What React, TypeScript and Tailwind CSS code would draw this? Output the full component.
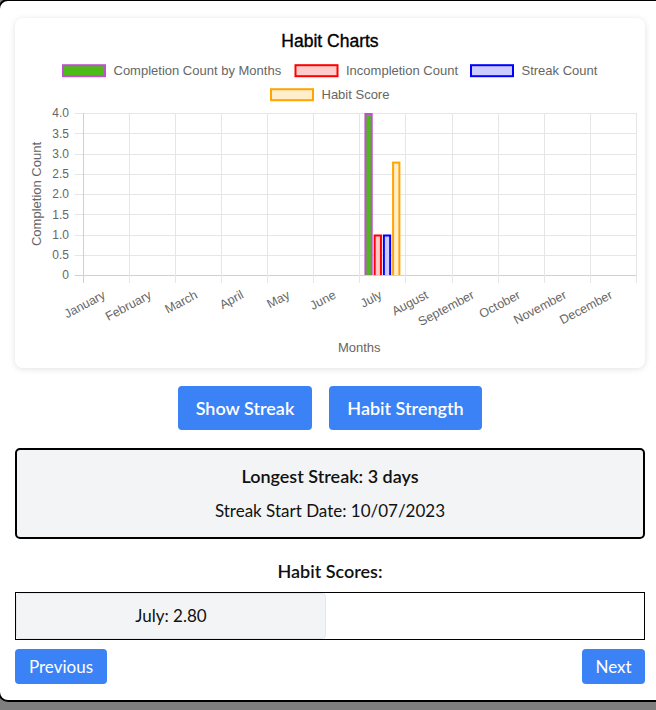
import React from "react";

const months = [
  "January",
  "February",
  "March",
  "April",
  "May",
  "June",
  "July",
  "August",
  "September",
  "October",
  "November",
  "December",
];

const L = 82.7;
const R = 636;
const T = 113;
const B = 275;
const CW = (R - L) / 12;
const yFor = (v: number) => B - (v / 4) * (B - T);

const ticks = ["4.0", "3.5", "3.0", "2.5", "2.0", "1.5", "1.0", "0.5", "0"];

const FONT = "'Liberation Sans', Arial, sans-serif";

function Bar({ x0, x1, v, fill, stroke }: { x0: number; x1: number; v: number; fill: string; stroke: string }) {
  const top = yFor(v);
  return (
    <g>
      <rect x={x0} y={top} width={x1 - x0} height={B - top} fill={stroke} />
      <rect x={x0 + 2} y={top + 2} width={x1 - x0 - 4} height={B - top - 2} fill={fill} />
    </g>
  );
}

function LegendItem({ x, cy, label, fill, stroke }: { x: number; cy: number; label: string; fill: string; stroke: string }) {
  return (
    <g>
      <rect x={x + 1} y={cy - 5.5} width={42} height={11} fill={fill} stroke={stroke} strokeWidth={2} />
      <text x={x + 51.5} y={cy + 4.6} fontSize={13} fill="#666" fontFamily={FONT}>
        {label}
      </text>
    </g>
  );
}

function Chart() {
  const cat = 6;
  const c0 = L + CW * cat;
  const inner = CW * 0.8;
  const start = c0 + (CW - inner) / 2;
  const slot = inner / 4;
  const bw = slot * 0.9;
  const bx = (i: number) => start + slot * i + (slot - bw) / 2;
  return (
    <svg width={630} height={350} viewBox="15 18 630 350" className="block">
      <text x={330} y={46.5} textAnchor="middle" fontSize={17.5} fill="#000" fontFamily={FONT} stroke="#000" strokeWidth={0.35}>
        Habit Charts
      </text>
      <LegendItem x={62} cy={70.7} label="Completion Count by Months" fill="#4cbb17" stroke="#c050d0" />
      <LegendItem x={294.5} cy={70.7} label="Incompletion Count" fill="#ffcccc" stroke="#ff0000" />
      <LegendItem x={470} cy={70.7} label="Streak Count" fill="#ccccff" stroke="#0000ff" />
      <LegendItem x={270} cy={94.7} label="Habit Score" fill="#ffedcc" stroke="#ffa500" />

      {ticks.map((t, k) => {
        const y = Math.round(T + k * ((B - T) / 8)) + 0.5;
        return (
          <g key={t}>
            <line x1={74.7} x2={R} y1={y} y2={y} stroke={k === 8 ? "#d0d0d0" : "#e6e6e6"} strokeWidth={1} />
            <text x={69} y={T + k * ((B - T) / 8) + 4.3} textAnchor="end" fontSize={12} fill="#666" fontFamily={FONT}>
              {t}
            </text>
          </g>
        );
      })}
      {Array.from({ length: 13 }).map((_, i) => {
        const x = Math.round(L + CW * i) + 0.5;
        return (
          <line key={i} x1={x} x2={x} y1={T} y2={283} stroke={i === 0 ? "#d0d0d0" : "#e6e6e6"} strokeWidth={1} />
        );
      })}

      <Bar x0={bx(0)} x1={bx(0) + bw} v={4} fill="#4cbb17" stroke="#c050d0" />
      <Bar x0={bx(1)} x1={bx(1) + bw} v={1} fill="#ffcccc" stroke="#ff0000" />
      <Bar x0={bx(2)} x1={bx(2) + bw} v={1} fill="#ccccff" stroke="#0000ff" />
      <Bar x0={bx(3)} x1={bx(3) + bw} v={2.8} fill="#ffedcc" stroke="#ffa500" />

      {months.map((m, i) => {
        const cx = L + CW * (i + 0.5) + 0.5;
        const yb = 297.5;
        return (
          <text
            key={m}
            x={cx}
            y={yb}
            textAnchor="end"
            fontSize={12.5}
            fill="#666"
            fontFamily={FONT}
            transform={`rotate(-28 ${cx} ${yb})`}
          >
            {m}
          </text>
        );
      })}

      <text x={359.3} y={352} textAnchor="middle" fontSize={13} fill="#666" fontFamily={FONT}>
        Months
      </text>
      <text
        x={0}
        y={0}
        textAnchor="middle"
        fontSize={13}
        fill="#666"
        fontFamily={FONT}
        transform="translate(40.6 194) rotate(-90)"
      >
        Completion Count
      </text>
    </svg>
  );
}

export default function App() {
  return (
    <div className="w-[656px] h-[710px] bg-[#7f7f7f] overflow-hidden font-['Lato','Noto_Sans',sans-serif] text-[#111]">
      <div className="-mt-[1px] -ml-[2px] w-[700px] h-[703px] border-2 border-black rounded-[10px] bg-white">
        <div className="ml-[15px] w-[630px] pt-[17px] flex flex-col">
          <div className="h-[350px] bg-white rounded-lg shadow-[0_1px_6px_rgba(0,0,0,0.12)]">
            <Chart />
          </div>

          <div className="mt-[18px] flex justify-center gap-[17px]">
            <button className="w-[134px] h-[44px] rounded-[4px] bg-[#3b82f6] text-white text-lg font-semibold leading-7">
              Show Streak
            </button>
            <button className="w-[153px] h-[44px] rounded-[4px] bg-[#3b82f6] text-white text-lg font-semibold leading-7">
              Habit Strength
            </button>
          </div>

          <div className="mt-[18px] h-[91px] border-2 border-black rounded-[5px] bg-[#f3f4f6] pt-[12px] text-center text-lg">
            <p className="font-semibold leading-7">Longest Streak: 3 days</p>
            <p className="mt-[7px] text-[17px] leading-7">Streak Start Date: 10/07/2023</p>
          </div>

          <p className="mt-[18px] text-center text-lg font-semibold leading-7">Habit Scores:</p>

          <div className="mt-[7px] h-[48px] border border-black flex">
            <div className="w-[310px] h-full bg-[#f3f4f6] border border-[#e5e7eb] rounded-[4px] flex items-center justify-center text-[17px]">
              July: 2.80
            </div>
          </div>

          <div className="mt-[9px] flex justify-between">
            <button className="w-[92px] h-[35px] rounded-[4px] bg-[#3b82f6] text-white text-[17px] leading-7">
              Previous
            </button>
            <button className="w-[63px] h-[35px] rounded-[4px] bg-[#3b82f6] text-white text-[17px] leading-7">
              Next
            </button>
          </div>
        </div>
      </div>
    </div>
  );
}
